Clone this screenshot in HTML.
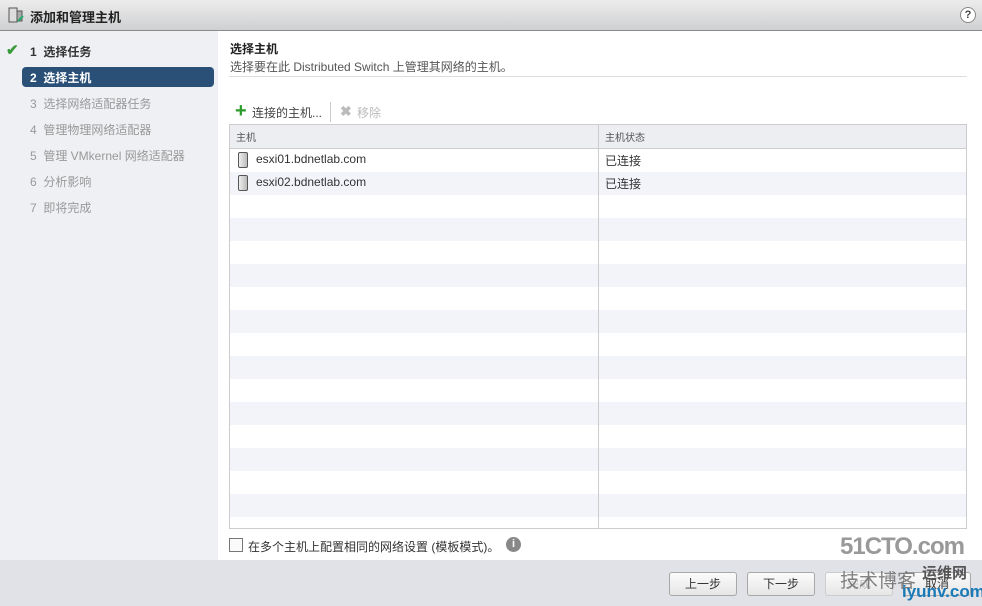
<!DOCTYPE html>
<html><head><meta charset="utf-8"><style>
*{margin:0;padding:0;box-sizing:border-box}
body{width:982px;height:606px;overflow:hidden;position:relative;background:#fff;font-family:"Liberation Sans","Noto Sans CJK SC",sans-serif;font-size:12px;color:#333}
.title{position:absolute;left:0;top:0;width:982px;height:31px;background:linear-gradient(#ececec,#cfd0d2);border-bottom:1px solid #8a8a8a}
.title span{position:absolute;left:30px;top:7px;font-size:13px;font-weight:bold;color:#222}
.left{position:absolute;left:0;top:31px;width:218px;height:529px;background:#eef0f3}
.step{position:absolute;left:30px;font-size:12px;color:#999}
.step.done{color:#333;font-weight:bold}
.sel{position:absolute;left:22px;top:36px;width:192px;height:20px;background:#2b5078;border-radius:4px}
.footer{position:absolute;left:0;top:560px;width:982px;height:46px;background:#e1e2e8}
.btn{position:absolute;top:572px;width:68px;height:24px;border:1px solid #a8a8a8;border-radius:3px;background:linear-gradient(#fbfbfb,#e6e6e6);text-align:center;line-height:22px;font-size:12px}
table{position:absolute;left:229px;top:124px;width:738px;border-collapse:collapse;border:1px solid #ccc}
td{height:23px;padding:0 6px;border-right:1px solid #ccc}
tr.h td{background:#eceef2;font-size:10px;color:#555;border-bottom:1px solid #ccc;height:24px}
tr:nth-child(odd):not(.h) td{background:#f3f4fa}
.srv{display:inline-block;width:10px;height:16px;border:1px solid #555;border-radius:2px;background:linear-gradient(90deg,#eee,#bbb);vertical-align:middle;margin-right:8px;margin-left:2px}
</style></head><body>
<div class="title"><svg style="position:absolute;left:8px;top:7px" width="16" height="17"><rect x="1" y="1" width="8" height="14" fill="#ddd" stroke="#555"/><rect x="9" y="4" width="5" height="10" fill="#aaa" stroke="#555"/><path d="M10 14 L15 9" stroke="#2a6" stroke-width="2"/></svg><span>添加和管理主机</span>
<div style="position:absolute;left:960px;top:7px;width:16px;height:16px;border:1px solid #888;border-radius:50%;background:#fff;font-size:11px;font-weight:bold;text-align:center;line-height:14px;color:#444">?</div></div>
<div class="left">
<div style="position:absolute;left:6px;top:10px;color:#3a9a3a;font-size:15px;font-weight:bold">✔</div>
<div class="sel"></div>
<div class="step done" style="top:12px">1&nbsp; 选择任务</div>
<div class="step done" style="top:38px;color:#fff">2&nbsp; 选择主机</div>
<div class="step" style="top:64px">3&nbsp; 选择网络适配器任务</div>
<div class="step" style="top:90px">4&nbsp; 管理物理网络适配器</div>
<div class="step" style="top:116px">5&nbsp; 管理 VMkernel 网络适配器</div>
<div class="step" style="top:142px">6&nbsp; 分析影响</div>
<div class="step" style="top:168px">7&nbsp; 即将完成</div>
</div>
<div style="position:absolute;left:230px;top:40px;font-weight:bold;font-size:12px;color:#222">选择主机</div>
<div style="position:absolute;left:230px;top:58px;font-size:12px;color:#555">选择要在此 Distributed Switch 上管理其网络的主机。</div>
<div style="position:absolute;left:229px;top:76px;width:738px;border-top:1px solid #ddd"></div>
<div style="position:absolute;left:235px;top:102px;color:#2a9a2a;font-size:20px;font-weight:bold;line-height:18px">+</div>
<div style="position:absolute;left:252px;top:104px;font-size:12px;color:#444">连接的主机...</div>
<div style="position:absolute;left:330px;top:102px;height:20px;border-left:1px solid #ccc"></div>
<div style="position:absolute;left:340px;top:103px;font-size:14px;color:#bbb;font-weight:bold;line-height:16px">✖</div>
<div style="position:absolute;left:357px;top:104px;font-size:12px;color:#bbb">移除</div>
<table>
<tr class="h"><td style="width:369px">主机</td><td>主机状态</td></tr>
<tr><td><span class="srv"></span>esxi01.bdnetlab.com</td><td>已连接</td></tr>
<tr><td><span class="srv"></span>esxi02.bdnetlab.com</td><td>已连接</td></tr>
<tr><td></td><td></td></tr><tr><td></td><td></td></tr><tr><td></td><td></td></tr><tr><td></td><td></td></tr><tr><td></td><td></td></tr><tr><td></td><td></td></tr><tr><td></td><td></td></tr><tr><td></td><td></td></tr><tr><td></td><td></td></tr><tr><td></td><td></td></tr><tr><td></td><td></td></tr><tr><td></td><td></td></tr><tr><td></td><td></td></tr><tr><td></td><td></td></tr><tr><td style="height:12px"></td><td style="height:12px"></td></tr>
</table>
<div style="position:absolute;left:229px;top:538px;width:14px;height:14px;border:1px solid #777;background:#fafafa"></div>
<div style="position:absolute;left:248px;top:538px;font-size:12px;color:#333">在多个主机上配置相同的网络设置 (模板模式)。</div>
<div style="position:absolute;left:506px;top:537px;width:15px;height:15px;border-radius:50%;background:#888;color:#fff;font-size:11px;font-weight:bold;text-align:center;line-height:15px">i</div>
<div class="footer"></div>
<div class="btn" style="left:669px">上一步</div>
<div class="btn" style="left:747px">下一步</div>
<div class="btn" style="left:825px;color:#bbb;border-color:#ccc">完成</div>
<div class="btn" style="left:903px">取消</div>
<div style="position:absolute;left:840px;top:533px;font-size:24px;font-weight:bold;color:#888;opacity:.85;letter-spacing:-1px">51CTO.com</div>
<div style="position:absolute;left:840px;top:566px;font-size:19px;color:#666;opacity:.8">技术博客</div>
<div style="position:absolute;left:922px;top:562px;font-size:15px;color:#555;font-weight:bold">运维网</div>
<div style="position:absolute;left:902px;top:582px;font-size:17px;color:#1a7ab8;font-weight:bold">iyunv.com</div>
</body></html>
